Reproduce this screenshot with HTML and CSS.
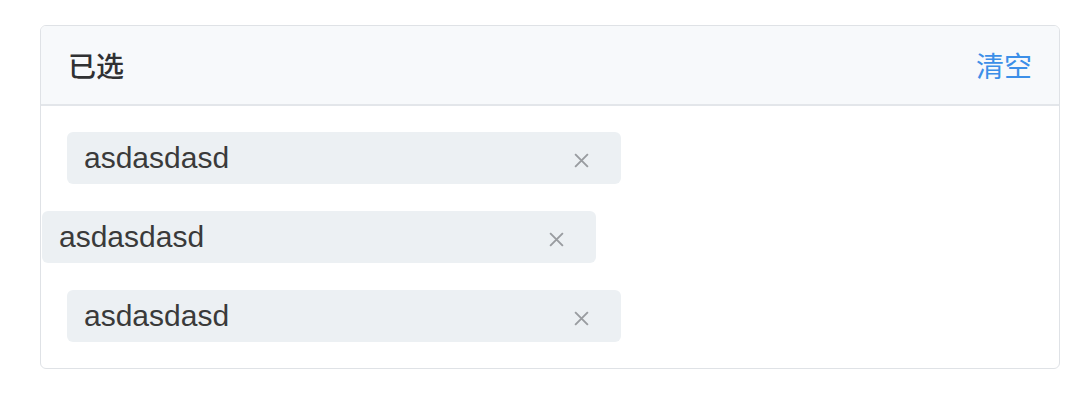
FILE: index.html
```html
<!DOCTYPE html>
<html lang="zh">
<head>
<meta charset="utf-8">
<link rel="stylesheet" href="styles.css">
</head>
<body>
<div class="page">
  <div class="card">
    <div class="card-header">
      <span class="title">已选</span>
      <a class="clear">清空</a>
    </div>
    <div class="card-body">
      <div class="item">
        <span class="label">asdasdasd</span>
        <svg class="close" viewBox="0 0 16 16" width="16" height="16"><path d="M2 2 L14 14 M14 2 L2 14" stroke="currentColor" stroke-width="1.8" fill="none"/></svg>
      </div>
      <div class="item dragging">
        <span class="label">asdasdasd</span>
        <svg class="close" viewBox="0 0 16 16" width="16" height="16"><path d="M2 2 L14 14 M14 2 L2 14" stroke="currentColor" stroke-width="1.8" fill="none"/></svg>
      </div>
      <div class="item">
        <span class="label">asdasdasd</span>
        <svg class="close" viewBox="0 0 16 16" width="16" height="16"><path d="M2 2 L14 14 M14 2 L2 14" stroke="currentColor" stroke-width="1.8" fill="none"/></svg>
      </div>
    </div>
  </div>
</div>
</body>
</html>
```
FILE: styles.css
```css
html, body {
  margin: 0;
  padding: 0;
  background: #ffffff;
}
.page {
  padding: 25px 26px 0 40px;
  font-family: "Liberation Sans", "Noto Sans CJK SC", sans-serif;
}
.card {
  border: 1px solid #dfe2e6;
  border-radius: 6px;
  overflow: hidden;
}
.card-header {
  height: 78px;
  background: #f7f9fb;
  border-bottom: 2px solid #e3e6ea;
  display: flex;
  align-items: center;
  justify-content: space-between;
  padding: 0 27px 0 27px;
}
.title {
  font-family: "Noto Sans CJK SC", sans-serif;
  font-size: 28px;
  font-weight: 500;
  color: #303133;
}
.clear {
  font-family: "Noto Sans CJK SC", sans-serif;
  font-size: 28px;
  color: #3c8fe8;
  cursor: pointer;
}
.card-body {
  padding: 26px 26px 26px 26px;
  display: flex;
  flex-direction: column;
  gap: 27px;
}
.item {
  width: 554px;
  height: 52px;
  box-sizing: border-box;
  background: #ecf0f3;
  border-radius: 6px;
  display: flex;
  align-items: center;
  justify-content: space-between;
  padding: 0 31px 0 17px;
}
.item.dragging {
  transform: translateX(-25px);
}
.label {
  font-size: 30px;
  color: #3a3a3a;
  line-height: 1;
}
.close {
  color: #999ca0;
  width: 17px;
  height: 17px;
  margin-top: 4px;
}
```
